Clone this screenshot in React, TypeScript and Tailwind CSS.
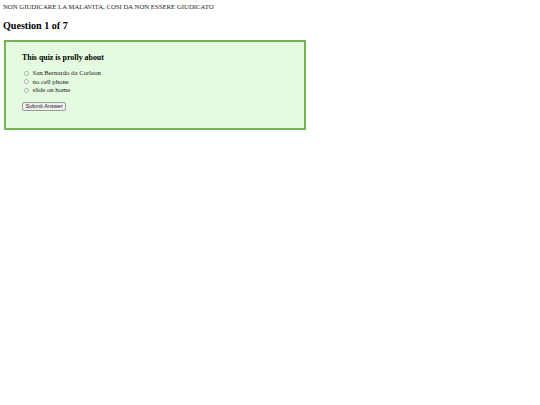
export default function App() {
  const options = ["San Bernardo da Corleon", "no cell phone", "slide on home"];
  return (
    <div className="min-h-[405px] bg-white px-[3px] pt-[3px] font-['Liberation_Serif',serif] text-[6.75px] leading-[8px] text-[#1a1a1a]">
      <p>NON GIUDICARE LA MALAVITA, COSI DA NON ESSERE GIUDICATO</p>
      <h2 className="mt-[9px] text-[10.1px] font-bold leading-[12px] text-black">Question 1 of 7</h2>
      <div className="ml-[1px] mt-[8px] h-[90px] w-[302px] border-2 border-[#72b454] bg-[#e5fbe0] px-[16px] pt-[11px]">
        <h3 className="text-[7.9px] font-bold leading-[9px] text-black">This quiz is prolly about</h3>
        <div className="mt-[7px] flex flex-col">
          {options.map((o) => (
            <label key={o} className="flex h-[8.5px] items-center">
              <span className="ml-[1.5px] inline-block h-[5px] w-[5px] rounded-full border border-[#a8a8a8] bg-white" />
              <span className="ml-[4px]">{o}</span>
            </label>
          ))}
        </div>
        <button className="mt-[7px] block h-[9.5px] rounded-[2px] border border-[#999999] bg-[#efefef] px-[2.5px] font-['Liberation_Sans',sans-serif] text-[5.6px] leading-[7px] text-[#222]">
          Submit Answer
        </button>
      </div>
    </div>
  );
}
